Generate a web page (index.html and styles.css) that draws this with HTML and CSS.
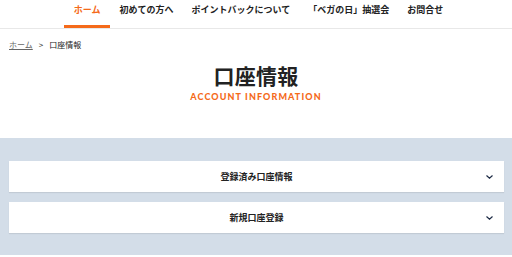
FILE: index.html
```html
<!DOCTYPE html>
<html lang="ja">

<head>
    <meta charset="UTF-8">
    <meta name="viewport" content="width=device-width, initial-scale=1.0">
    <title>口座情報</title>
    <link rel="stylesheet" href="styles.css">
</head>

<body>
    <!-- Global Nav -->
    <nav class="global-nav">
        <ul>
            <li class="active"><a href="#">ホーム</a></li>
            <li><a href="#">初めての方へ</a></li>
            <li><a href="#">ポイントバックについて</a></li>
            <li><a href="#">「ベガの日」抽選会</a></li>
            <li><a href="#">お問合せ</a></li>
        </ul>
    </nav>

    <!-- Breadcrumb -->
    <div class="breadcrumb">
        <a href="#">ホーム</a>
        <span class="sep">&gt;</span>
        <span>口座情報</span>
    </div>

    <!-- Page Title -->
    <div class="page-title">
        <h1>口座情報</h1>
        <p>ACCOUNT INFORMATION</p>
    </div>

    <!-- Accordion -->
    <section class="account-section">
        <div class="acc-item">
            <span>登録済み口座情報</span>
            <svg class="chevron" width="7" height="4" viewBox="0 0 7 4">
                <path d="M0.5 0.5 L3.5 3.2 L6.5 0.5" fill="none" stroke="#1c2a44" stroke-width="1.2" />
            </svg>
        </div>
        <div class="acc-item">
            <span>新規口座登録</span>
            <svg class="chevron" width="7" height="4" viewBox="0 0 7 4">
                <path d="M0.5 0.5 L3.5 3.2 L6.5 0.5" fill="none" stroke="#1c2a44" stroke-width="1.2" />
            </svg>
        </div>
    </section>
</body>

</html>
```

FILE: styles.css
```css
/* General Styles */
body {
    font-family: "Noto Sans CJK JP", "Liberation Sans", sans-serif;
    margin: 0;
    padding: 0;
    background-color: #ffffff;
    color: #222;
}

a {
    color: inherit;
    text-decoration: none;
}

/* Nav */
.global-nav {
    border-bottom: 1px solid #e8e8e8;
}

.global-nav ul {
    list-style: none;
    margin: 0;
    padding: 0 0 0 4px;
    display: flex;
    justify-content: center;
}

.global-nav li a {
    display: block;
    height: 25px;
    line-height: 20px;
    padding: 0 9px;
    font-size: 9px;
    font-weight: bold;
    color: #222;
    border-bottom: 3px solid transparent;
}

.global-nav li.active a {
    padding: 0 10px;
    color: #f56a1a;
    border-bottom-color: #f56a1a;
}

/* Breadcrumb */
.breadcrumb {
    padding: 10px 9px 0;
    font-size: 8px;
    line-height: 12px;
    color: #222;
    display: flex;
    gap: 6px;
}

.breadcrumb a {
    color: #666;
    text-decoration: underline;
}

/* Title */
.page-title {
    text-align: center;
    padding-top: 9px;
    height: 78px;
}

.page-title h1 {
    margin: 0;
    font-size: 21px;
    line-height: 30px;
    font-weight: bold;
    letter-spacing: 0.3px;
}

.page-title p {
    margin: 1px 0 0;
    font-family: "Lato", "Liberation Sans", sans-serif;
    font-size: 9px;
    font-weight: 900;
    line-height: 12px;
    letter-spacing: 1.1px;
    color: #f56a1a;
}

/* Accordion section */
.account-section {
    background-color: #d3dde8;
    padding: 23px 8px 22px 9px;
    display: flex;
    flex-direction: column;
    gap: 10px;
}

.acc-item {
    position: relative;
    background-color: #ffffff;
    height: 31px;
    display: flex;
    align-items: center;
    justify-content: center;
    font-size: 9px;
    font-weight: bold;
    box-shadow: 0 1px 1px rgba(0, 0, 0, 0.08);
}

.acc-item .chevron {
    position: absolute;
    right: 11px;
    top: 14px;
}
```
